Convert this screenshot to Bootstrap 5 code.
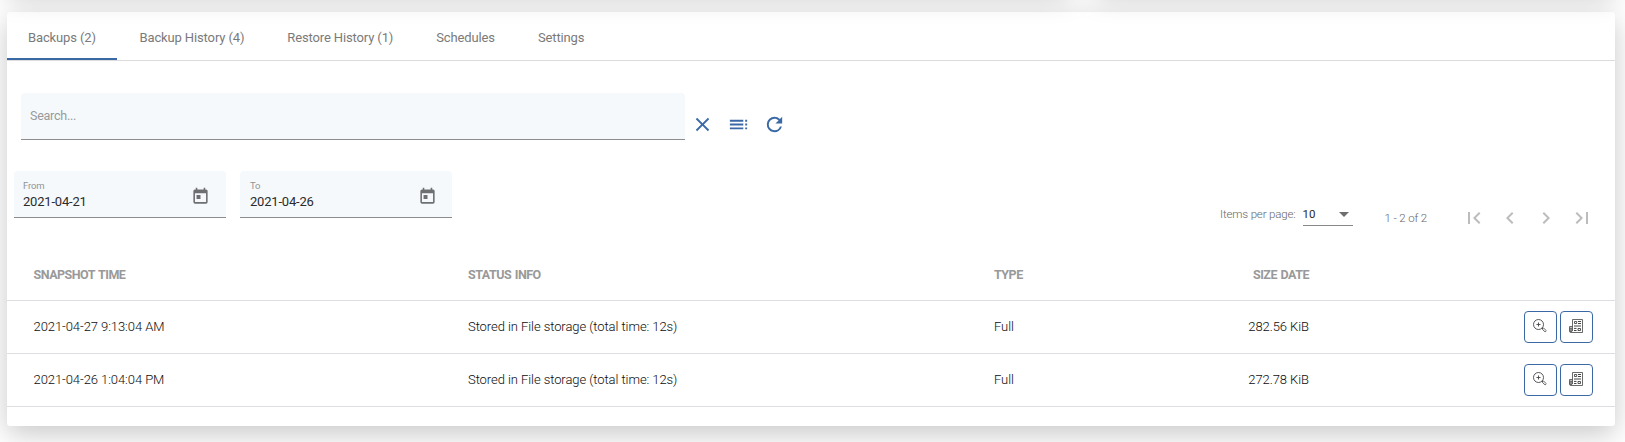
<!DOCTYPE html>
<html lang="en">
<head>
<meta charset="utf-8">
<meta name="viewport" content="width=device-width, initial-scale=1">
<title>Backups</title>
<link href="https://cdn.jsdelivr.net/npm/bootstrap@5.3.0/dist/css/bootstrap.min.css" rel="stylesheet">
<style>
  body { font-family: Roboto, "Liberation Sans", sans-serif; font-size: 13px; line-height: 20px; color: #2b2b2b; background: #fff; height: 442px; overflow: hidden; }
  .raised { background: #fff; border-radius: 3px; box-shadow: 0 8px 28px rgba(0,0,0,.22); }
  .upper { height: 40px; margin: -52px 10px 0 7px; gap: 24px; }
  .upper-a { width: 1064px; }
  .panel { margin: 24px 10px 0 7px; height: 414px; }
  .tabs { height: 49px; border-bottom: 1px solid #dcdcdc; --bs-nav-link-padding-x: 21.5px; --bs-nav-link-padding-y: 0; --bs-nav-link-color: #7a7a7a; --bs-nav-link-hover-color: #555; letter-spacing: -.13px; }
  .tabs .nav-link { height: 48px; line-height: 51px; font-weight: 400; border-radius: 0; border-bottom: 2px solid transparent; white-space: nowrap; }
  .tabs .nav-link.active { border-color: #3a69a5; width: 110px; padding-left: 21px; margin-right: 1px; }
  .field { background: #f5f9fc; border: 0; border-bottom: 1px solid #8b8d8f; border-radius: 4px 4px 0 0; height: 47px; }
  .search-row { margin: 32px 0 0 14px; }
  .search-row .field { width: 664px; padding: 0 9px 2px; font-size: 12.5px; letter-spacing: -.25px; color: #2b2b2b; }
  .search-row .field::placeholder { color: #97999b; opacity: 1; }
  .tool { border: 0; background: none; padding: 0; width: 36px; height: 24px; color: #3a69a5; display: flex; justify-content: center; align-items: center; }
  .tool svg, .pager svg { width: 24px; height: 24px; fill: currentColor; }
  .search-row .tool svg { width: 23px; height: 23px; margin: 0 1px 1px 0; }
  .dates { margin: 31px 0 0 7px; gap: 14px; }
  .dates .field { width: 212px; padding: 8px 16px 0 9px; }
  .dates .field + .field { padding-left: 10px; padding-right: 15px; }
  .dates label { display: block; font-size: 9.5px; line-height: 13px; color: #919395; letter-spacing: -.1px; }
  .dates .value { line-height: 20px; letter-spacing: -.2px; }
  .dates svg { width: 19px; height: 19px; fill: #6e6f70; margin-top: 8px; }
  .pager { font-size: 11.5px; color: #666; margin: 0 15px -12px 0; font-weight: 300; letter-spacing: -.15px; }
  .pager .per-page { width: 50px; height: 24px; border-bottom: 1px solid #888; color: #2b2b2b; line-height: 25px; font-weight: 400; padding-top: 1px; }
  .selector { margin-bottom: 3px; }
  .ipp { line-height: 25px; margin-right: 7px; }
  .range { margin: 0 29px 0 32px; line-height: 23px; }
  .caret-down { width: 0; border: 5px solid transparent; border-top-color: #6e6e6e; border-bottom: 0; margin-right: 4px; }
  .pager .tool { color: #bcbcbc; }
  .grid-table { table-layout: fixed; margin: 32px 0 0; width: 100%; --bs-table-bg: transparent; border-color: #dcdee2; }
  .grid-table th { height: 50px; color: #999; font-weight: 700; font-size: 12.5px; letter-spacing: -.5px; word-spacing: 1px; }
  .grid-table td { height: 53px; color: #0c0c0c; font-weight: 300; letter-spacing: -.07px; }
  .grid-table th, .grid-table td { padding: 0; vertical-align: middle; border-bottom: 1px solid #dcdee2; }
  .grid-table th:first-child, .grid-table td:first-child { padding-left: 26.5px; }
  .acts { gap: 3px; padding: 1px 22px 0 0; }
  .act { width: 33px; height: 32px; border: 1px solid #3a69a5; border-radius: 4px; background: #fff; padding: 0 1px 2px 0; display: flex; justify-content: center; align-items: center; }
  .act svg { width: 14px; height: 14px; fill: none; stroke: #444; }
</style>
</head>
<body>
<div class="d-flex upper">
  <div class="raised upper-a"></div>
  <div class="raised flex-fill"></div>
</div>

<main class="raised panel">
  <ul class="nav tabs flex-nowrap">
    <li class="nav-item"><a class="nav-link active" href="#">Backups (2)</a></li>
    <li class="nav-item"><a class="nav-link" href="#">Backup History (4)</a></li>
    <li class="nav-item"><a class="nav-link" href="#">Restore History (1)</a></li>
    <li class="nav-item"><a class="nav-link" href="#">Schedules</a></li>
    <li class="nav-item"><a class="nav-link" href="#">Settings</a></li>
  </ul>

  <div class="d-flex search-row">
    <input class="field" type="text" placeholder="Search..." aria-label="Search">
    <div class="d-flex mt-3 pt-1">
      <button class="tool" aria-label="Clear"><svg viewBox="0 0 24 24"><path d="M19 6.41 17.59 5 12 10.59 6.41 5 5 6.41 10.59 12 5 17.59 6.41 19 12 13.41 17.59 19 19 17.59 13.41 12z"/></svg></button>
      <button class="tool" aria-label="Columns"><svg viewBox="0 0 24 24"><path d="M3 9h14V7H3v2zm0 4h14v-2H3v2zm0 4h14v-2H3v2zm16 0h2v-2h-2v2zm0-10v2h2V7h-2zm0 6h2v-2h-2v2z"/></svg></button>
      <button class="tool" aria-label="Refresh"><svg viewBox="0 0 24 24"><path d="M17.65 6.35A7.958 7.958 0 0 0 12 4a8 8 0 1 0 7.73 10h-2.08A5.99 5.99 0 0 1 12 18a6 6 0 1 1 0-12c1.66 0 3.14.69 4.22 1.78L13 11h7V4l-2.35 2.35z"/></svg></button>
    </div>
  </div>

  <div class="d-flex justify-content-between">
    <div class="d-flex dates">
      <div class="field d-flex justify-content-between">
        <div><label>From</label><div class="value">2021-04-21</div></div>
        <svg viewBox="0 0 24 24"><path d="M19 3h-1V1h-2v2H8V1H6v2H5a2 2 0 0 0-2 2v14c0 1.100.9 2 2 2h14a2 2 0 0 0 2-2V5a2 2 0 0 0-2-2zm0 16H5V8h14v11zM7 10h5v5H7z"/></svg>
      </div>
      <div class="field d-flex justify-content-between">
        <div><label>To</label><div class="value">2021-04-26</div></div>
        <svg viewBox="0 0 24 24"><path d="M19 3h-1V1h-2v2H8V1H6v2H5a2 2 0 0 0-2 2v14c0 1.100.9 2 2 2h14a2 2 0 0 0 2-2V5a2 2 0 0 0-2-2zm0 16H5V8h14v11zM7 10h5v5H7z"/></svg>
      </div>
    </div>
    <div class="d-flex align-items-end pager">
      <div class="d-flex selector">
        <span class="ipp">Items per page:</span>
        <div class="per-page d-flex justify-content-between align-items-center"><span>10</span><span class="caret-down"></span></div>
      </div>
      <span class="range">1 - 2 of 2</span>
      <button class="tool" aria-label="First page"><svg viewBox="0 0 24 24"><path d="M18.410 16.590 13.820 12l4.590-4.590L17 6l-6 6 6 6zM6 6h2v12H6z"/></svg></button>
      <button class="tool" aria-label="Previous page"><svg viewBox="0 0 24 24"><path d="M15.410 7.410 14 6l-6 6 6 6 1.410-1.410L10.830 12z"/></svg></button>
      <button class="tool" aria-label="Next page"><svg viewBox="0 0 24 24"><path d="M10 6 8.590 7.410 13.170 12l-4.580 4.590L10 18l6-6z"/></svg></button>
      <button class="tool" aria-label="Last page"><svg viewBox="0 0 24 24"><path d="M5.590 7.410 10.180 12l-4.590 4.590L7 18l6-6-6-6zM16 6h2v12h-2z"/></svg></button>
    </div>
  </div>

  <table class="table grid-table">
    <colgroup><col style="width:461px"><col style="width:526px"><col style="width:200px"><col style="width:115px"><col></colgroup>
    <thead><tr><th>SNAPSHOT TIME</th><th>STATUS INFO</th><th>TYPE</th><th class="text-end">SIZE DATE</th><th></th></tr></thead>
    <tbody id="rows"></tbody>
  </table>
</main>

<template id="row">
  <tr>
    <td class="time"></td><td class="status"></td><td class="kind"></td><td class="size text-end"></td>
    <td><div class="d-flex justify-content-end acts">
      <button class="act" aria-label="Details"><svg viewBox="0 0 14 14"><circle cx="5.500" cy="5.500" r="5" stroke-width=".9"/><path d="M5.500 3.500v4M3.500 5.500h4" stroke-width=".9"/><path d="M9 9l1 1" stroke-width=".9"/><path d="M9.700 9.900l1-.800 2.600 2.600-1.200 1.200-2.500-2.300z" stroke-width=".8"/></svg></button>
      <button class="act" aria-label="Log"><svg viewBox="0 0 14 14"><path d="M3.500 12V.5h10V13.500H2A1.500 1.500 0 0 1 .5 12V7.500h3" stroke-width=".8"/><path d="M5.500 2.500h2.200v2H5.500zM9 9.500h2.500v2H9zM1.200 9h1.600v3.500H1.200z" stroke-width=".9"/><path d="M9 2.500h3M9 4.500h3M5 7h7M5 9.400h2.500M5 11.500h2.500" stroke-width="1"/></svg></button>
    </div></td>
  </tr>
</template>

<script src="https://cdn.jsdelivr.net/npm/bootstrap@5.3.0/dist/js/bootstrap.bundle.min.js"></script>
<script>
  const backups = [
    ["2021-04-27 9:13:04 AM", "Stored in File storage (total time: 12s)", "Full", "282.56 KiB"],
    ["2021-04-26 1:04:04 PM", "Stored in File storage (total time: 12s)", "Full", "272.78 KiB"]
  ];
  const tpl = document.getElementById("row");
  for (const b of backups) {
    const r = tpl.content.cloneNode(true);
    [".time", ".status", ".kind", ".size"].forEach((s, i) => r.querySelector(s).textContent = b[i]);
    document.getElementById("rows").append(r);
  }
</script>
</body>
</html>
